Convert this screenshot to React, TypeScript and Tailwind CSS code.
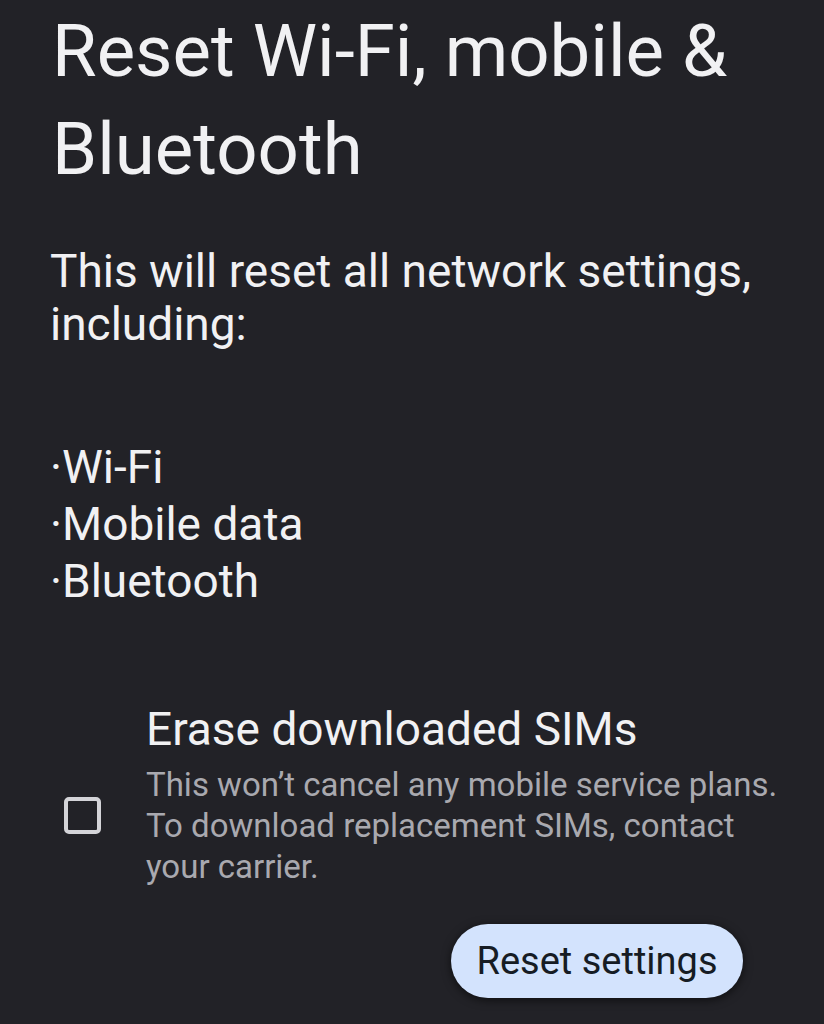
export default function App() {
  return (
    <div className="w-[824px] h-[1024px] overflow-hidden bg-[#222227] text-[#f1f1f3] font-['Roboto',sans-serif]">
      {/* Title */}
      <h1 className="pl-[52px] pt-[3px] text-[72.5px] leading-[98px] font-normal whitespace-nowrap">
        <div>Reset Wi-Fi, mobile &amp;</div>
        <div>Bluetooth</div>
      </h1>

      {/* Description */}
      <div className="mt-[46px] pl-[50px] text-[46px] whitespace-nowrap">
        <div className="leading-[53px]">
          <div>This will reset all network settings,</div>
          <div>including:</div>
        </div>
        <div className="mt-[88px] leading-[57px]">
          <div>·Wi-Fi</div>
          <div>·Mobile data</div>
          <div>·Bluetooth</div>
        </div>
      </div>

      {/* Erase SIMs option */}
      <div className="mt-[91px] pl-[64px] flex items-center">
        <div className="w-[37px] h-[37px] rounded-[5px] border-[4px] border-[#d4d4d8] mt-[42px]" />
        <div className="ml-[45px]">
          <div className="text-[46px] leading-[56px] whitespace-nowrap">Erase downloaded SIMs</div>
          <div className="mt-[7px] text-[33px] leading-[41px] text-[#a9a9af] whitespace-nowrap">
            <div>This won’t cancel any mobile service plans.</div>
            <div>To download replacement SIMs, contact</div>
            <div>your carrier.</div>
          </div>
        </div>
      </div>

      {/* Action */}
      <div className="mt-[37px] pr-[81px] flex justify-end">
        <button className="w-[292px] h-[74px] rounded-full bg-[#d3e3fd] text-[#161c24] text-[38px] shadow-[0_2px_10px_rgba(0,0,0,0.6)]">
          Reset settings
        </button>
      </div>
    </div>
  );
}
